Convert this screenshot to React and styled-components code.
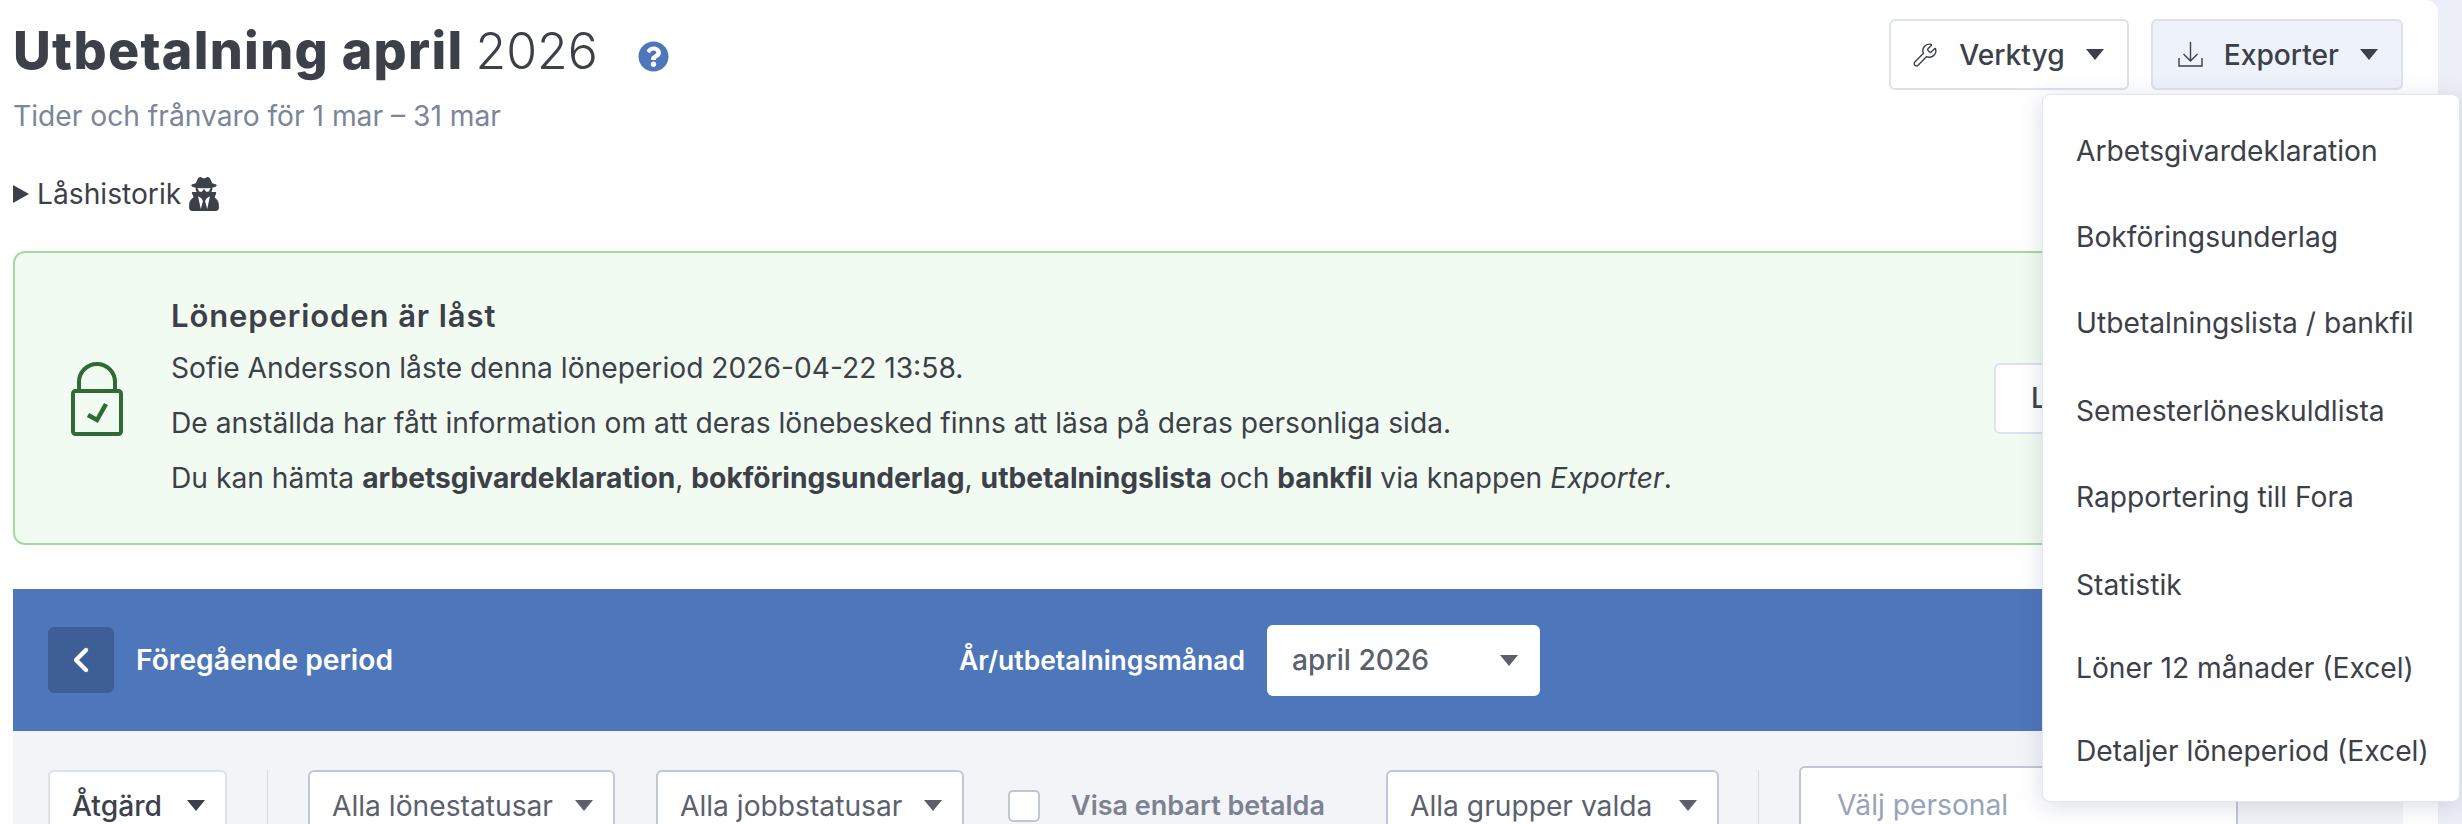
import React from 'react';
import styled, { createGlobalStyle } from 'styled-components';
import { Wrench, ChevronLeft } from 'lucide-react';
import { FaUserSecret, FaQuestionCircle } from 'react-icons/fa';

const exportItems = [
  'Arbetsgivardeklaration',
  'Bokföringsunderlag',
  'Utbetalningslista / bankfil',
  'Semesterlöneskuldlista',
  'Rapportering till Fora',
  'Statistik',
  'Löner 12 månader (Excel)',
  'Detaljer löneperiod (Excel)',
];

const LockIcon = () => (
  <svg width="52" height="75" viewBox="0 0 52 75" fill="none" stroke="#2f6b36" strokeWidth="4">
    <path d="M8 30V21a18 18 0 0 1 36 0v9" />
    <rect x="2" y="30" width="48" height="43" rx="2.5" />
    <path d="M17 54l9 5 9-16" strokeWidth="4.5" />
  </svg>
);

const ExportIcon = () => (
  <svg width="25" height="25" viewBox="0 0 25 25" fill="none" stroke="#3c4049" strokeWidth="1.4">
    <path d="M12.5 0v19M5.5 12l7 7 7-7" />
    <path d="M1 16v8h23v-8" />
  </svg>
);

const App = () => {
  return (
    <>
      <GlobalStyle />
      <Panel>
        <Header>
          <div>
            <Title>
              <b>Utbetalning april</b> 2026
              <Help>
                <FaQuestionCircle />
              </Help>
            </Title>
            <SubTitle>Tider och frånvaro för 1 mar – 31 mar</SubTitle>
          </div>
          <Actions>
            <ToolButton>
              <Wrench size={26} strokeWidth={1.3} />
              <span>Verktyg</span>
              <Caret />
            </ToolButton>
            <ToolButton $active>
              <ExportIcon />
              <span>Exporter</span>
              <Caret />
            </ToolButton>
          </Actions>
        </Header>

        <History>
          <Triangle />
          Låshistorik
          <FaUserSecret />
        </History>

        <Notice>
          <LockSlot>
            <LockIcon />
          </LockSlot>
          <NoticeText>
            <NoticeTitle>Löneperioden är låst</NoticeTitle>
            <p>Sofie Andersson låste denna löneperiod 2026-04-22 13:58.</p>
            <p>De anställda har fått information om att deras lönebesked finns att läsa på deras personliga sida.</p>
            <p>
              Du kan hämta <b>arbetsgivardeklaration</b>, <b>bokföringsunderlag</b>, <b>utbetalningslista</b> och{' '}
              <b>bankfil</b> via knappen <i>Exporter</i>.
            </p>
          </NoticeText>
          <UnlockButton>Lås upp</UnlockButton>
        </Notice>

        <PeriodBar>
          <PrevGroup>
            <BackButton>
              <ChevronLeft size={40} strokeWidth={2.6} />
            </BackButton>
            Föregående period
          </PrevGroup>
          <MonthLabel>År/utbetalningsmånad</MonthLabel>
          <MonthSelect>
            april 2026
            <Caret $muted />
          </MonthSelect>
        </PeriodBar>

        <FilterBar>
          <ActionSelect>
            Åtgärd
            <Caret />
          </ActionSelect>
          <Divider />
          <FilterSelect $width={307}>
            Alla lönestatusar
            <Caret $muted />
          </FilterSelect>
          <FilterSelect $width={308}>
            Alla jobbstatusar
            <Caret $muted />
          </FilterSelect>
          <CheckLabel>
            <CheckBox />
            Visa enbart betalda
          </CheckLabel>
          <FilterSelect $width={333}>
            Alla grupper valda
            <Caret $muted />
          </FilterSelect>
          <Divider />
          <PersonInput>Välj personal</PersonInput>
        </FilterBar>
      </Panel>

      <ExportMenu>
        {exportItems.map((item) => (
          <MenuItem key={item}>{item}</MenuItem>
        ))}
      </ExportMenu>
    </>
  );
};

const GlobalStyle = createGlobalStyle`
  html, body {
    margin: 0;
    height: 824px;
    overflow: hidden;
    background: #edeff8;
  }
  body {
    font-family: Inter, "Liberation Sans", sans-serif;
    font-size: 28.2px;
    color: #3c4049;
  }
  p {
    margin: 0;
  }
`;

const Panel = styled.div`
  width: 2438px;
  height: 824px;
  box-sizing: border-box;
  padding: 0 35px 0 13px;
  background: #fff;
  border-top-right-radius: 12px;
  overflow: hidden;
`;

const Header = styled.div`
  display: flex;
  justify-content: space-between;
  align-items: flex-start;
  padding-top: 19px;
`;

const Title = styled.h1`
  margin: 0;
  font-family: Inter, sans-serif;
  font-size: 50px;
  line-height: 64px;
  font-weight: 300;
  color: #3c4049;
  white-space: pre-wrap;

  b {
    margin-right: -2px;
    font-size: 52px;
    font-weight: 800;
    letter-spacing: 1.3px;
  }
`;

const Help = styled.span`
  display: inline-block;
  margin-left: 40px;
  font-size: 31px;
  line-height: 31px;
  color: #4e76bb;
  vertical-align: -3px;
`;

const SubTitle = styled.p`
  margin-top: 17px;
  line-height: 32px;
  color: #7a8699;
`;

const Actions = styled.div`
  display: flex;
  gap: 22px;
`;

const ToolButton = styled.button`
  display: flex;
  align-items: center;
  height: 71px;
  padding: 0 23px 0 ${(props) => (props.$active ? '25px' : '21px')};
  gap: 21px;
  font: 500 28.2px Inter, sans-serif;
  color: #3c4049;
  background: ${(props) => (props.$active ? '#eef2fb' : '#fff')};
  border: 2px solid #dde1ec;
  border-radius: 6px;
`;

const Caret = styled.i`
  display: inline-block;
  border-left: 9px solid transparent;
  border-right: 9px solid transparent;
  border-top: 11px solid ${(props) => (props.$muted ? '#5b616c' : '#3c4049')};
`;

const History = styled.div`
  display: flex;
  align-items: center;
  gap: 6px;
  margin-top: 42px;
  height: 40px;

  svg {
    font-size: 34px;
  }
`;

const Triangle = styled.i`
  margin-right: 2px;
  border-top: 9px solid transparent;
  border-bottom: 9px solid transparent;
  border-left: 16px solid #3c4049;
`;

const Notice = styled.div`
  display: flex;
  align-items: center;
  height: 294px;
  margin-top: 37px;
  box-sizing: border-box;
  background: #f1fbf1;
  border: 2px solid #a6d9a0;
  border-radius: 12px;
  padding-right: 167px;
`;

const LockSlot = styled.div`
  display: flex;
  justify-content: center;
  box-sizing: border-box;
  width: 156px;
  flex-shrink: 0;
  padding-left: 8px;
`;

const NoticeText = styled.div`
  flex: 1;
  line-height: 55px;
`;

const NoticeTitle = styled.h2`
  margin: 1px 0 0;
  font-size: 31px;
  line-height: 50px;
  font-weight: 600;
  letter-spacing: 0.9px;
`;

const UnlockButton = styled.button`
  height: 71px;
  width: 240px;
  padding-left: 35px;
  text-align: left;
  font: 500 28.2px Inter, sans-serif;
  color: #3c4049;
  background: #fff;
  border: 2px solid #dde1ec;
  border-radius: 6px;
`;

const PeriodBar = styled.div`
  display: flex;
  align-items: center;
  height: 142px;
  margin-top: 44px;
  padding: 0 35px;
  background: #4e76bb;
  color: #fff;
  font-weight: 600;
`;

const PrevGroup = styled.div`
  display: flex;
  align-items: center;
  gap: 22px;
  width: 911px;
`;

const BackButton = styled.div`
  display: flex;
  align-items: center;
  justify-content: center;
  width: 66px;
  height: 66px;
  border-radius: 6px;
  background: #3d5f96;
`;

const MonthLabel = styled.div`
  margin-right: 22px;
  font-size: 26.5px;
`;

const MonthSelect = styled.div`
  display: flex;
  align-items: center;
  justify-content: space-between;
  width: 273px;
  height: 71px;
  box-sizing: border-box;
  padding: 0 22px 0 25px;
  border-radius: 6px;
  background: #fff;
  color: #5b616c;
  font-weight: 500;
`;

const FilterBar = styled.div`
  display: flex;
  align-items: flex-start;
  height: 200px;
  padding: 39px 35px 0;
  background: #f3f4f8;
`;

const ActionSelect = styled.div`
  display: flex;
  align-items: center;
  justify-content: space-between;
  flex-shrink: 0;
  width: 179px;
  height: 71px;
  box-sizing: border-box;
  padding: 0 20px 0 22px;
  background: #fff;
  border: 2px solid #dde1ec;
  border-radius: 6px;
  font-weight: 500;
`;

const Divider = styled.div`
  flex-shrink: 0;
  width: 1px;
  height: 71px;
  margin: 0 40px;
  background: #d5d9e3;
`;

const FilterSelect = styled.div`
  display: flex;
  align-items: center;
  justify-content: space-between;
  flex-shrink: 0;
  width: ${(props) => props.$width}px;
  height: 71px;
  box-sizing: border-box;
  padding: 0 20px 0 22px;
  margin-right: 41px;
  background: #fff;
  border: 2px solid #c0c6d6;
  border-radius: 6px;
  color: #5b616c;

  & + ${Divider} {
    margin-left: -2px;
  }
`;

const CheckLabel = styled.label`
  display: flex;
  align-items: center;
  flex-shrink: 0;
  gap: 31px;
  height: 71px;
  width: 378px;
  margin-left: 3px;
  font-size: 27px;
  font-weight: 600;
  color: #7c8292;
`;

const CheckBox = styled.span`
  width: 32px;
  height: 32px;
  box-sizing: border-box;
  background: #fff;
  border: 2px solid #c0c6d6;
  border-radius: 5px;
`;

const PersonInput = styled.div`
  display: flex;
  align-items: center;
  flex-shrink: 0;
  width: 439px;
  height: 78px;
  margin-top: -4px;
  box-sizing: border-box;
  padding-left: 36px;
  background: #fff;
  border: 2px solid #c0c6d6;
  border-radius: 6px;
  color: #97a3b8;
`;

const ExportMenu = styled.div`
  position: absolute;
  top: 94px;
  left: 2042px;
  width: 418px;
  height: 708px;
  box-sizing: border-box;
  padding: 13px 0;
  background: #fff;
  border: 1px solid #e2e5ef;
  border-radius: 8px;
  box-shadow: 0 4px 24px rgba(60, 70, 110, 0.18);
`;

const MenuItem = styled.div`
  height: 86px;
  line-height: 86px;
  padding-left: 33px;
  white-space: nowrap;

  &:nth-child(4),
  &:nth-child(6) {
    margin-top: 2px;
  }

  &:nth-last-child(-n + 2) {
    height: 80px;
    line-height: 80px;
  }

  &:last-child {
    margin-top: 3px;
  }
`;

export default App;
